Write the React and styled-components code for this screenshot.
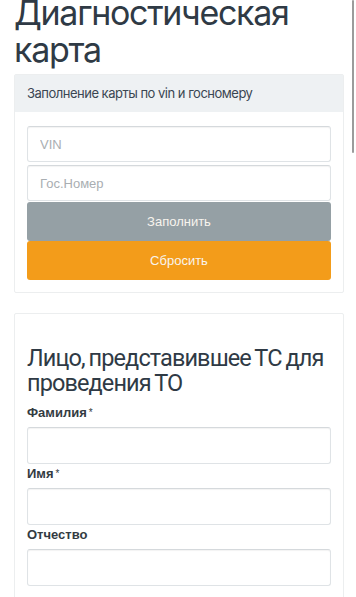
import React from "react";
import styled, { createGlobalStyle } from "styled-components";

const GlobalStyle = createGlobalStyle`
  html, body {
    margin: 0;
    padding: 0;
    background: #ffffff;
  }
  body {
    font-family: Inter, "Noto Sans", sans-serif;
    color: #2f3a45;
    overflow: hidden;
  }
  * {
    box-sizing: border-box;
  }
`

const Page = styled.div`
  padding: 0 12px 0 14px;
`

const Title = styled.h1`
  font-size: 34px;
  font-weight: 400;
  line-height: 37px;
  margin: -6px 0 6px 0;
  letter-spacing: -1.3px;
  color: #2f3a45;
`

const Card = styled.section`
  border: 1px solid #eceeef;
  border-radius: 2px;
  background: #fff;
  margin-bottom: 20px;
`

const CardHeader = styled.div`
  background: #eef1f3;
  font-size: 13px;
  line-height: 17px;
  padding: 10px 12px 10px 12px;
  color: #3a4652;
  letter-spacing: -0.5px;
`

const CardBody = styled.div`
  padding: ${({ $top }) => $top || 14}px 12px 12px 12px;
  display: flex;
  flex-direction: column;
`

const Input = styled.input`
  display: block;
  width: 100%;
  height: ${({ $h }) => $h || 36}px;
  border: 1px solid #dfe3e6;
  border-top-color: #d5d9dc;
  border-radius: 3px;
  box-shadow: inset 0 1px 1px rgba(0, 0, 0, 0.05);
  padding: 0 12px;
  margin-bottom: ${({ $gap }) => $gap ?? 3}px;
  font-family: "Liberation Sans", Arial, sans-serif;
  font-size: 13px;
  color: #333;
  background: #fff;
  outline: none;

  &::placeholder {
    color: #a9aeb2;
  }
`

const Button = styled.button`
  display: block;
  width: 100%;
  height: 39px;
  border: none;
  border-radius: 3px;
  background: ${({ $variant }) => ($variant === "warning" ? "#f39c1a" : "#95a0a5")};
  color: #f8f4ee;
  font-family: "Liberation Sans", Arial, sans-serif;
  font-size: 13px;
  cursor: pointer;
`

const SectionTitle = styled.h2`
  font-family: Roboto, "Noto Sans", sans-serif;
  font-size: 23.5px;
  font-weight: 400;
  line-height: 25px;
  margin: 20px 0 9px 0;
  letter-spacing: -0.9px;
  word-spacing: -1px;
  color: #2f3a45;
`

const TitleLine = styled.span`
  white-space: nowrap;
`

const Label = styled.label`
  display: block;
  font-family: "Liberation Sans", Arial, sans-serif;
  font-weight: 700;
  font-size: 13px;
  line-height: 16px;
  color: #333b42;
  margin: 0 0 6px 0;
`

const Required = styled.span`
  font-weight: 400;
  font-size: 10px;
  vertical-align: top;
  margin-left: 2px;
`

const Field = styled.div`
  margin-bottom: 2px;
`

const ScrollThumb = styled.div`
  position: fixed;
  top: 0;
  right: 2px;
  width: 2px;
  height: 153px;
  background: #9b9b9b;
  border-radius: 1px;
`

const fields = [
  { label: "Фамилия", required: true },
  { label: "Имя", required: true },
  { label: "Отчество", required: false },
]

export default function App() {
  return (
    <>
      <GlobalStyle />
      <Page>
        <Title>Диагностическая карта</Title>
        <Card>
          <CardHeader>Заполнение карты по vin и госномеру</CardHeader>
          <CardBody>
            <Input placeholder="VIN" />
            <Input placeholder="Гос.Номер" $gap={1} />
            <Button>Заполнить</Button>
            <Button $variant="warning">Сбросить</Button>
          </CardBody>
        </Card>
        <Card>
          <CardBody $top={12}>
            <SectionTitle>
              <TitleLine>Лицо, представившее ТС для</TitleLine>
              <br />
              <TitleLine>проведения ТО</TitleLine>
            </SectionTitle>
            {fields.map((f) => (
              <Field key={f.label}>
                <Label>
                  {f.label}
                  {f.required && <Required>*</Required>}
                </Label>
                <Input $gap={0} $h={37} />
              </Field>
            ))}
          </CardBody>
        </Card>
      </Page>
      <ScrollThumb />
    </>
  )
}
